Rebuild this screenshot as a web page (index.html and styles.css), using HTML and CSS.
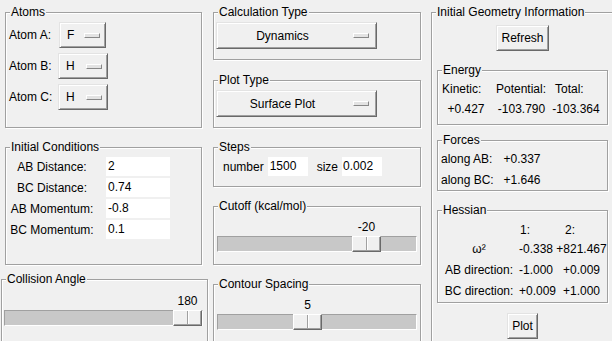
FILE: index.html
```html
<!DOCTYPE html>
<html lang="en">
<head>
    <meta charset="UTF-8">
    <title>Triatomic Reaction Dynamics</title>
    <link rel="stylesheet" href="styles.css">
</head>
<body>
    <div class="app">
        <!-- left column -->
        <div class="col col-left">
            <fieldset class="frame atoms-frame">
                <legend>Atoms</legend>
                <div class="atom-grid">
                    <span>Atom A:</span>
                    <div class="menubutton atom-btn narrow"><span class="mb-text">F</span><span class="indicator"></span></div>
                    <span>Atom B:</span>
                    <div class="menubutton atom-btn"><span class="mb-text">H</span><span class="indicator"></span></div>
                    <span>Atom C:</span>
                    <div class="menubutton atom-btn"><span class="mb-text">H</span><span class="indicator"></span></div>
                </div>
            </fieldset>

            <fieldset class="frame cond-frame">
                <legend>Initial Conditions</legend>
                <div class="cond-grid">
                    <span class="label">AB Distance:</span>
                    <div class="entry">2</div>
                    <span class="label">BC Distance:</span>
                    <div class="entry">0.74</div>
                    <span class="label">AB Momentum:</span>
                    <div class="entry">-0.8</div>
                    <span class="label">BC Momentum:</span>
                    <div class="entry">0.1</div>
                </div>
            </fieldset>

            <fieldset class="frame angle-frame">
                <legend>Collision Angle</legend>
                <div class="scale angle-scale" style="--pos: 169px">
                    <div class="scale-value">180</div>
                    <div class="trough"><div class="thumb"></div></div>
                </div>
            </fieldset>
        </div>

        <!-- middle column -->
        <div class="col col-mid">
            <fieldset class="frame calc-frame">
                <legend>Calculation Type</legend>
                <div class="menubutton wide"><span class="mb-text">Dynamics</span><span class="indicator"></span></div>
            </fieldset>

            <fieldset class="frame plot-frame">
                <legend>Plot Type</legend>
                <div class="menubutton wide"><span class="mb-text">Surface Plot</span><span class="indicator"></span></div>
            </fieldset>

            <fieldset class="frame steps-frame">
                <legend>Steps</legend>
                <div class="steps-row">
                    <span>number</span>
                    <div class="entry small">1500</div>
                    <span class="size-label">size</span>
                    <div class="entry small tight">0.002</div>
                </div>
            </fieldset>

            <fieldset class="frame cutoff-frame">
                <legend>Cutoff (kcal/mol)</legend>
                <div class="scale mid-scale" style="--pos: 135px">
                    <div class="scale-value">-20</div>
                    <div class="trough"><div class="thumb"></div></div>
                </div>
            </fieldset>

            <fieldset class="frame contour-frame">
                <legend>Contour Spacing</legend>
                <div class="scale mid-scale" style="--pos: 76px">
                    <div class="scale-value">5</div>
                    <div class="trough"><div class="thumb"></div></div>
                </div>
            </fieldset>
        </div>

        <!-- right column -->
        <div class="col col-right">
            <fieldset class="frame info-frame">
                <legend>Initial Geometry Information</legend>
                <div class="info-body">
                    <div class="button refresh-btn">Refresh</div>

                    <fieldset class="frame sub-frame energy-frame">
                        <legend>Energy</legend>
                        <div class="energy-grid">
                            <span class="head kin">Kinetic:</span>
                            <span class="head pot">Potential:</span>
                            <span class="head tot">Total:</span>
                            <span>+0.427</span>
                            <span>-103.790</span>
                            <span>-103.364</span>
                        </div>
                    </fieldset>

                    <fieldset class="frame sub-frame forces-frame">
                        <legend>Forces</legend>
                        <div class="forces-grid">
                            <span>along AB:</span>
                            <span class="val">+0.337</span>
                            <span>along BC:</span>
                            <span class="val">+1.646</span>
                        </div>
                    </fieldset>

                    <fieldset class="frame sub-frame hessian-frame">
                        <legend>Hessian</legend>
                        <div class="hess-grid">
                            <span></span>
                            <span class="head-1">1:</span>
                            <span class="head-2">2:</span>
                            <span>ω²</span>
                            <span>-0.338</span>
                            <span>+821.467</span>
                            <span>AB direction:</span>
                            <span>-1.000</span>
                            <span>+0.009</span>
                            <span>BC direction:</span>
                            <span>+0.009</span>
                            <span>+1.000</span>
                        </div>
                    </fieldset>

                    <div class="button plot-btn">Plot</div>
                </div>
            </fieldset>
        </div>
    </div>
</body>
</html>
```

FILE: styles.css
```css
* {
    box-sizing: border-box;
}
body {
    margin: 0;
    width: 612px;
    height: 341px;
    overflow: hidden;
    background-color: #f0f0f0;
    font-family: "Liberation Sans", Arial, sans-serif;
    font-size: 12px;
    color: #000;
}
.app {
    display: flex;
    align-items: flex-start;
}
.col {
    display: flex;
    flex-direction: column;
    flex: none;
}
.col-left {
    width: 208px;
}
.col-mid {
    width: 213px;
    padding-left: 5px;
}
.col-right {
    padding-left: 10px;
}

/* group frames (tk labelframe, groove) */
.frame {
    margin: 0;
    padding: 0;
    min-width: 0;
    border: 1px solid #a0a0a0;
    box-shadow: 1px 1px 0 #fff, inset 1px 1px 0 #fff;
}
.frame legend {
    padding: 0 1px;
    margin-left: 4px;
    line-height: 14px;
    background-color: #f0f0f0;
}

.atoms-frame {
    margin: 5px 0 0 5px;
    width: 197px;
    height: 123px;
}
.cond-frame {
    margin: 12px 0 0 5px;
    width: 197px;
    height: 125px;
}
.angle-frame {
    margin: 7px 0 0 1px;
    width: 207px;
    height: 80px;
}
.calc-frame {
    margin-top: 5px;
    width: 208px;
    height: 55px;
}
.plot-frame {
    margin-top: 13px;
    width: 208px;
    height: 55px;
}
.steps-frame {
    margin-top: 12px;
    width: 208px;
    height: 47px;
}
.cutoff-frame {
    margin-top: 12px;
    width: 208px;
    height: 66px;
}
.contour-frame {
    margin-top: 12px;
    width: 208px;
    height: 70px;
}
.info-frame {
    margin-top: 5px;
    width: 183px;
    height: 345px;
}

/* atoms */
.atom-grid {
    display: grid;
    grid-template-columns: 49px auto;
    grid-auto-rows: 26px;
    row-gap: 5px;
    align-items: center;
    justify-items: start;
    padding: 3px 0 0 3px;
}

/* tk menubutton */
.menubutton {
    display: flex;
    align-items: center;
    height: 26px;
    background-color: #f0f0f0;
    border: 1px solid;
    border-color: #e3e3e3 #696969 #696969 #e3e3e3;
    box-shadow: inset 1px 1px 0 #fff, inset -1px -1px 0 #a0a0a0;
}
.indicator {
    width: 16px;
    height: 5px;
    background-color: #e3e3e3;
    border: 1px solid;
    border-color: #fff #888 #888 #fff;
}
.atom-btn {
    width: 50px;
    padding-left: 7px;
}
.atom-btn.narrow {
    width: 47px;
    margin-left: 1px;
}
.atom-btn .indicator {
    margin-left: auto;
    margin-right: 5px;
}
.menubutton.wide {
    width: 161px;
    height: 27px;
    margin: 3px 0 0 2px;
}
.wide .mb-text {
    flex: 1;
    text-align: center;
}
.wide .indicator {
    margin: 0 7px 0 5px;
}

/* entries */
.entry {
    height: 19px;
    line-height: 19px;
    padding-left: 2px;
    background-color: #fff;
    white-space: nowrap;
    overflow: hidden;
}
.cond-grid {
    display: grid;
    grid-template-columns: 86px 64px;
    grid-auto-rows: 19px;
    column-gap: 11px;
    row-gap: 2px;
    align-items: center;
    padding: 3px 0 0 3px;
}
.cond-grid .label {
    text-align: center;
    white-space: nowrap;
}
.steps-row {
    display: flex;
    align-items: center;
    padding: 3px 0 0 9px;
}
.entry.small {
    width: 40px;
    margin-left: 4px;
}
.entry.tight {
    padding-left: 1px;
}
.size-label {
    margin-left: 9px;
}

/* tk scale */
.scale {
    padding-top: 7px;
}
.angle-scale {
    margin-left: 2px;
    width: 199px;
    padding-top: 8px;
}
.mid-scale {
    margin-left: 3px;
    width: 200px;
}
.scale-value {
    margin-left: var(--pos);
    width: 29px;
    text-align: center;
    line-height: 14px;
}
.trough {
    position: relative;
    height: 16px;
    margin-top: 2px;
    background-color: #c8c8c8;
    border: 1px solid;
    border-color: #a0a0a0 #fff #fff #a0a0a0;
}
.thumb {
    position: absolute;
    top: -1px;
    bottom: -1px;
    left: calc(var(--pos) - 1px);
    width: 29px;
    background-color: #f0f0f0;
    border: 1px solid;
    border-color: #fff #696969 #696969 #fff;
    box-shadow: inset -1px -1px 0 #a0a0a0;
}
.thumb::after {
    content: "";
    position: absolute;
    top: 0;
    bottom: 1px;
    left: 13px;
    width: 1px;
    background-color: #a0a0a0;
    box-shadow: 1px 0 0 #fff;
}

/* right column */
.info-body {
    display: flex;
    flex-direction: column;
    align-items: center;
}
.button {
    height: 26px;
    padding: 0 4px;
    line-height: 24px;
    background-color: #f0f0f0;
    border: 1px solid;
    border-color: #e3e3e3 #696969 #696969 #e3e3e3;
    box-shadow: inset 1px 1px 0 #fff, inset -1px -1px 0 #a0a0a0;
}
.refresh-btn {
    margin-top: 6px;
}
.plot-btn {
    margin-top: 10px;
}
.sub-frame {
    align-self: stretch;
    margin: 0 5px;
}
.energy-frame {
    margin-top: 12px;
    height: 62px;
}
.forces-frame {
    margin-top: 8px;
    height: 58px;
}
.hessian-frame {
    margin-top: 12px;
    height: 100px;
}
.energy-grid {
    display: grid;
    grid-template-columns: 50px 61px 48px;
    grid-auto-rows: 20px;
    align-items: center;
    justify-items: center;
    padding: 2px 0 0 3px;
    white-space: nowrap;
}
.energy-grid .head {
    justify-self: start;
}
.energy-grid .kin {
    padding-left: 1px;
}
.energy-grid .pot {
    padding-left: 5px;
}
.energy-grid .tot {
    padding-left: 3px;
}
.forces-grid {
    display: grid;
    grid-template-columns: 58px 46px;
    grid-auto-rows: 21px;
    align-items: center;
    padding: 1px 0 0 3px;
    white-space: nowrap;
}
.forces-grid .val {
    justify-self: center;
}
.hess-grid {
    display: grid;
    grid-template-columns: 76px 38px 53px;
    grid-template-rows: 19px 20px 22px 20px;
    align-items: center;
    padding: 3px 0 0 3px;
    white-space: nowrap;
}
.hess-grid > :nth-child(3n+1) {
    justify-self: center;
}
.hess-grid > :nth-child(3n+2) {
    padding-left: 2px;
}
.hess-grid > :nth-child(3n) {
    justify-self: center;
}
.hess-grid .head-1 {
    padding-left: 3px;
}
.hess-grid .head-2 {
    justify-self: start;
    padding-left: 10px;
}
```
